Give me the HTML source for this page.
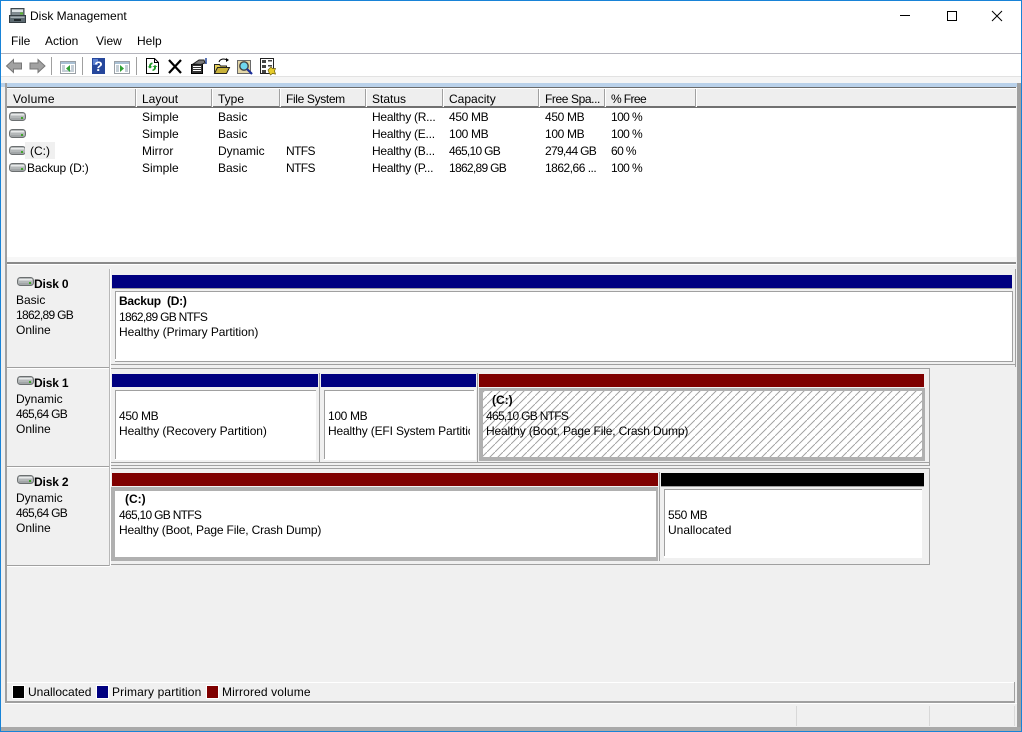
<!DOCTYPE html>
<html><head><meta charset="utf-8"><title>Disk Management</title>
<style>
html,body{margin:0;padding:0}
body{width:1022px;height:732px;position:relative;overflow:hidden;background:#f0f0f0;font:12px/15px "Liberation Sans",sans-serif;color:#000}
div,svg{position:absolute}
.t{position:absolute;white-space:nowrap;line-height:15px;margin-top:1px}
.b{font-weight:bold;margin-top:0}
.n{letter-spacing:-.7px}
.m{letter-spacing:-.35px}
.p{letter-spacing:-.6px}
.h{letter-spacing:-.25px}
.l{letter-spacing:-.16px}
.hl{background:#a0a0a0}
</style></head><body>
<!-- title + menu + toolbar -->
<div style="left:0;top:0;width:1022px;height:76px;background:#fff"></div>
<div style="left:0;top:53px;width:1022px;height:1px;background:#b4b4bc"></div>
<div style="left:0;top:76px;width:1022px;height:1px;background:#e2e2e2"></div>
<div style="left:0;top:77px;width:1022px;height:6px;background:#f5f5f5"></div>
<div style="left:0;top:83px;width:1017px;height:4px;background:#b9d1ea"></div>

<svg style="left:9px;top:7px" width="17" height="17" viewBox="0 0 17 17"><path d="M2 1.500h13v7H2z" fill="#7f8a90" stroke="#3e474c"/><path d="M3 2.500h11v2.500H3z" fill="#dfe5e8"/><path d="M11 5.500h3v2h-3z" fill="#5cb52f"/><path d="M.5 8.500h16v7H.5z" fill="#5d6b72" stroke="#333c41"/><path d="M1.500 9.500h14v1.500h-14z" fill="#a4aeb3"/><path d="M5 12h7v2H5z" fill="#1f282c"/></svg>
<span class="t" style="left:30px;top:8px">Disk Management</span>
<svg style="left:900px;top:10px" width="110" height="12" viewBox="0 0 110 12"><path d="M0 5.500h10" stroke="#000"/><path d="M47.500 1.500h9v9h-9z" fill="none" stroke="#000"/><path d="M92 1l10 10M102 1l-10 10" stroke="#000" fill="none"/></svg>

<span class="t" style="left:11px;top:33px">File</span>
<span class="t" style="left:45px;top:33px">Action</span>
<span class="t" style="left:96px;top:33px">View</span>
<span class="t" style="left:137px;top:33px">Help</span>

<!-- toolbar icons -->
<svg style="left:0;top:54px" width="290" height="23" viewBox="0 0 290 23">
<path d="M6.500 12l7-6.500v3.500h8v6h-8v3.500z" fill="#a2a2a2" stroke="#777"/>
<path d="M45 12l-7-6.500v3.500h-8v6h8v3.500z" fill="#a2a2a2" stroke="#777"/>
<path d="M51.500 3v18M82.500 3v18M136.500 3v18" stroke="#a0a0a0"/>
<path d="M60.500 7.500h15v12h-15z" fill="#fff" stroke="#9aa0a6"/><path d="M61 8h14v2H61z" fill="#a9c0d4"/><path d="M62 11h3v7h-3zM71 11h3v7h-3zM62 16h12v2H62z" fill="#c4ced6"/><path d="M66 14.500l4-3.500v7z" fill="#2fa032"/>
<path d="M92 4h13v16H92z" fill="#26479c"/><path d="M93 5h5v6h-5z" fill="#5a7fd0"/><text x="98.500" y="17" text-anchor="middle" font-family="Liberation Sans" font-weight="bold" font-size="14" fill="#fff">?</text>
<path d="M114.500 7.500h15v12h-15z" fill="#fff" stroke="#9aa0a6"/><path d="M115 8h14v2h-14z" fill="#a9c0d4"/><path d="M116 11h3v7h-3zM125 11h3v7h-3z" fill="#c4ced6"/><path d="M124 14.500l-4-3.500v7z" fill="#2fa032"/>
<path d="M146.500 4.500h8l4 4v11h-12z" fill="#fff" stroke="#000"/><path d="M154.500 4.500v4h4" fill="none" stroke="#000"/><path d="M152.500 8.500a3.500 3.500 0 0 0-3.500 4l-1.500 0 2.500 2 2.500-2h-1.500a2 2 0 0 1 1.500-2.500zM152.500 17a3.500 3.500 0 0 0 3.500-4l1.500 0-2.500-2-2.500 2h1.500a2 2 0 0 1-1.500 2.500z" fill="#1e9a28"/>
<path d="M169 6l12 13M181 6l-12 13" stroke="#000" stroke-width="2.200" fill="none"/>
<path d="M191.500 10.500h11v9h-11z" fill="#333" stroke="#000"/><path d="M193 12.500h8M193 14.500h8M193 16.500h8" stroke="#fff"/><path d="M193 10l6-4h5l1 3-4 1.500z" fill="#777" stroke="#222"/><path d="M206 4v6" stroke="#26479c" stroke-width="1.500"/>
<path d="M214.500 10.500h5l1 1.500h6v7h-12z" fill="#e8d25a" stroke="#222"/><path d="M214.500 19.500l3-6h12l-3 6z" fill="#c9b23a" stroke="#222"/><path d="M219 8c1-3 5-4 8-2" fill="none" stroke="#000"/><path d="M226 4l3 2-3 2z"/>
<path d="M237.500 6.500h13v13h-13z" fill="#e3d6a8" stroke="#6a6a6a"/><circle cx="244" cy="12" r="4.200" fill="#6fd6ee" stroke="#444" stroke-width="1.400"/><path d="M247 15l5 5" stroke="#1c2f9c" stroke-width="2.200"/>
<path d="M260.500 4.500h13v15h-13z" fill="#fff" stroke="#222"/><path d="M262 6h4v3h-4zM262 11h4v3h-4zM268 6h4v1.500h-4zM268 11h4v1.500h-4z" fill="#444"/><path d="M268 16l3-3 1.500 1.500 3 0-1 2.500 1 3-3-.5-2 1.500-1.500-2.500z" fill="#e6cc2a" stroke="#6b5c10" stroke-width=".7"/><path d="M262 16h4v3h-4z" fill="#444"/>
</svg>

<!-- frame -->
<div style="left:1017px;top:83px;width:4px;height:648px;background:#a0a0a0"></div>
<div style="left:5px;top:83px;width:2px;height:619px;background:#a0a0a0"></div>
<div style="left:0;top:727px;width:1022px;height:4px;background:#a9a9a9"></div>
<div style="left:0;top:0;width:1022px;height:1px;background:#1883d7"></div>
<div style="left:0;top:0;width:1px;height:732px;background:#1883d7"></div>
<div style="left:1021px;top:0;width:1px;height:732px;background:#1883d7"></div>
<div style="left:0;top:731px;width:1022px;height:1px;background:#1883d7"></div>

<!-- list -->
<div style="left:7px;top:87px;width:1009px;height:171px;background:#fff"></div>
<div style="left:7px;top:87px;width:1009px;height:1px;background:#6b6b6b"></div>
<div style="left:7px;top:88px;width:1009px;height:1px;background:#fff"></div>
<div style="left:7px;top:89px;width:1009px;height:17px;background:#eeeeee"></div>
<div style="left:7px;top:106px;width:1009px;height:2px;background:#707070"></div>
<div class="hl" style="left:135px;top:89px;width:1px;height:18px"></div><div style="left:136px;top:89px;width:1px;height:18px;background:#fff"></div>
<div class="hl" style="left:211px;top:89px;width:1px;height:18px"></div><div style="left:212px;top:89px;width:1px;height:18px;background:#fff"></div>
<div class="hl" style="left:279px;top:89px;width:1px;height:18px"></div><div style="left:280px;top:89px;width:1px;height:18px;background:#fff"></div>
<div class="hl" style="left:365px;top:89px;width:1px;height:18px"></div><div style="left:366px;top:89px;width:1px;height:18px;background:#fff"></div>
<div class="hl" style="left:442px;top:89px;width:1px;height:18px"></div><div style="left:443px;top:89px;width:1px;height:18px;background:#fff"></div>
<div class="hl" style="left:538px;top:89px;width:1px;height:18px"></div><div style="left:539px;top:89px;width:1px;height:18px;background:#fff"></div>
<div class="hl" style="left:604px;top:89px;width:1px;height:18px"></div><div style="left:605px;top:89px;width:1px;height:18px;background:#fff"></div>
<div class="hl" style="left:695px;top:89px;width:1px;height:18px"></div><div style="left:696px;top:89px;width:1px;height:18px;background:#fff"></div>

<span class="t" style="left:13px;top:91px;letter-spacing:.3px">Volume</span>
<span class="t" style="left:142px;top:91px">Layout</span>
<span class="t" style="left:218px;top:91px">Type</span>
<span class="t m" style="left:286px;top:91px">File System</span>
<span class="t" style="left:372px;top:91px">Status</span>
<span class="t" style="left:449px;top:91px">Capacity</span>
<span class="t" style="left:545px;top:91px;letter-spacing:-.4px">Free Spa...</span>
<span class="t p" style="left:611px;top:91px">% Free</span>

<svg style="left:9px;top:111px" width="17" height="64" viewBox="0 0 17 64">
<g id="d"><path d="M.5 4.500c0-1.500 1-3 3-3h10c2 0 3 1.500 3 3v2c0 1.500-1 3-3 3h-10c-2 0-3-1.500-3-3z" fill="#b4b8b9" stroke="#6b6f70"/><path d="M2 3h13v1.500H2z" fill="#e8eaea"/><path d="M2 7.500h13v1H2z" fill="#8f9496"/><path d="M12 6h2v2h-2z" fill="#3fa52a"/></g>
<use href="#d" y="17"/><use href="#d" y="34"/><use href="#d" y="51"/>
</svg>

<div style="left:25px;top:142px;width:30px;height:17px;background:#f0f0f0"></div>
<span class="t" style="left:30px;top:143px">(C:)</span>
<span class="t l" style="left:27px;top:160px">Backup (D:)</span>

<span class="t" style="left:142px;top:109px">Simple</span><span class="t" style="left:218px;top:109px">Basic</span><span class="t h" style="left:372px;top:109px">Healthy (R...</span><span class="t m" style="left:449px;top:109px">450 MB</span><span class="t m" style="left:545px;top:109px">450 MB</span><span class="t p" style="left:611px;top:109px">100 %</span>
<span class="t" style="left:142px;top:126px">Simple</span><span class="t" style="left:218px;top:126px">Basic</span><span class="t h" style="left:372px;top:126px">Healthy (E...</span><span class="t m" style="left:449px;top:126px">100 MB</span><span class="t m" style="left:545px;top:126px">100 MB</span><span class="t p" style="left:611px;top:126px">100 %</span>
<span class="t" style="left:142px;top:143px">Mirror</span><span class="t" style="left:218px;top:143px">Dynamic</span><span class="t p" style="left:286px;top:143px">NTFS</span><span class="t h" style="left:372px;top:143px">Healthy (B...</span><span class="t n" style="left:449px;top:143px">465,10 GB</span><span class="t n" style="left:545px;top:143px">279,44 GB</span><span class="t p" style="left:611px;top:143px">60 %</span>
<span class="t" style="left:142px;top:160px">Simple</span><span class="t" style="left:218px;top:160px">Basic</span><span class="t p" style="left:286px;top:160px">NTFS</span><span class="t h" style="left:372px;top:160px">Healthy (P...</span><span class="t n" style="left:449px;top:160px">1862,89 GB</span><span class="t" style="left:545px;top:160px;letter-spacing:-.5px">1862,66 ...</span><span class="t p" style="left:611px;top:160px">100 %</span>

<!-- splitter -->
<div style="left:7px;top:257px;width:1009px;height:5px;background:#f7f7f7"></div>
<div style="left:7px;top:262px;width:1009px;height:2px;background:#8a8a8a"></div>
<div style="left:7px;top:264px;width:1009px;height:1px;background:#fff"></div>

<!-- disk labels -->
<div class="hl" style="left:7px;top:367px;width:103px;height:1px"></div>
<div style="left:7px;top:368px;width:103px;height:1px;background:#fff"></div>
<div class="hl" style="left:7px;top:466px;width:103px;height:1px"></div>
<div style="left:7px;top:467px;width:103px;height:1px;background:#fff"></div>
<div class="hl" style="left:7px;top:565px;width:103px;height:1px"></div>
<div style="left:7px;top:566px;width:103px;height:1px;background:#fff"></div>
<div class="hl" style="left:109px;top:269px;width:1px;height:297px;background:#b8b8b8"></div>
<div style="left:110px;top:269px;width:1px;height:297px;background:#fff"></div>

<svg style="left:17px;top:276px" width="17" height="12"><use href="#d"/></svg>
<svg style="left:17px;top:375px" width="17" height="12"><use href="#d"/></svg>
<svg style="left:17px;top:474px" width="17" height="12"><use href="#d"/></svg>
<span class="t b" style="left:34px;top:277px;letter-spacing:-.15px">Disk 0</span>
<span class="t" style="left:16px;top:292px">Basic</span><span class="t n" style="left:16px;top:307px">1862,89 GB</span><span class="t" style="left:16px;top:322px">Online</span>
<span class="t b" style="left:34px;top:376px;letter-spacing:-.15px">Disk 1</span>
<span class="t" style="left:16px;top:391px">Dynamic</span><span class="t n" style="left:16px;top:406px">465,64 GB</span><span class="t" style="left:16px;top:421px">Online</span>
<span class="t b" style="left:34px;top:475px;letter-spacing:-.15px">Disk 2</span>
<span class="t" style="left:16px;top:490px">Dynamic</span><span class="t n" style="left:16px;top:505px">465,64 GB</span><span class="t" style="left:16px;top:520px">Online</span>

<!-- Disk 0 -->
<div class="hl" style="left:1015px;top:269px;width:1px;height:98px"></div>
<div class="hl" style="left:111px;top:364px;width:905px;height:1px"></div>
<div style="left:112px;top:275px;width:900px;height:13px;background:#000080"></div>
<div style="left:112px;top:288px;width:900px;height:1px;background:#a0a0a0"></div>
<div style="left:115px;top:291px;width:897px;height:70px;background:#fff"></div>
<div class="hl" style="left:115px;top:291px;width:897px;height:1px"></div>
<div class="hl" style="left:115px;top:291px;width:1px;height:68px"></div>
<div class="hl" style="left:1012px;top:291px;width:1px;height:71px"></div>
<div class="hl" style="left:115px;top:361px;width:898px;height:1px"></div>
<span class="t b" style="left:119px;top:294px;letter-spacing:-.25px">Backup&nbsp; (D:)</span>
<span class="t n" style="left:119px;top:309px">1862,89 GB NTFS</span>
<span class="t" style="left:119px;top:324px;letter-spacing:-.05px">Healthy (Primary Partition)</span>

<!-- Disk 1 -->
<div class="hl" style="left:111px;top:368px;width:819px;height:1px"></div>
<div class="hl" style="left:929px;top:368px;width:1px;height:98px"></div>
<div class="hl" style="left:111px;top:465px;width:819px;height:1px"></div>
<div class="hl" style="left:111px;top:462px;width:818px;height:1px"></div>
<div class="hl" style="left:319px;top:373px;width:1px;height:89px"></div>
<div class="hl" style="left:477px;top:373px;width:1px;height:89px"></div>

<div style="left:112px;top:374px;width:206px;height:13px;background:#000080"></div>
<div style="left:321px;top:374px;width:155px;height:13px;background:#000080"></div>
<div style="left:479px;top:374px;width:445px;height:13px;background:#7f0000"></div>
<div style="left:115px;top:390px;width:201px;height:70px;background:#fff"></div>
<div class="hl" style="left:115px;top:390px;width:201px;height:1px"></div>
<div class="hl" style="left:115px;top:390px;width:1px;height:69px"></div>
<div style="left:324px;top:390px;width:152px;height:70px;background:#fff"></div>
<div class="hl" style="left:324px;top:390px;width:150px;height:1px"></div>
<div class="hl" style="left:324px;top:390px;width:1px;height:69px"></div>
<svg style="left:479px;top:388px" width="446" height="73" viewBox="0 0 446 73"><defs><pattern id="hp" width="8" height="8" patternUnits="userSpaceOnUse"><rect width="8" height="8" fill="#fff"/><path d="M0 8L8 0" stroke="#a8a8a8" stroke-width="1" shape-rendering="crispEdges"/></pattern></defs><rect width="446" height="73" fill="#b0b0b0"/><rect x="4" y="3" width="439" height="66" fill="url(#hp)"/></svg>
<span class="t m" style="left:119px;top:408px">450 MB</span>
<span class="t" style="left:119px;top:423px;letter-spacing:-.08px">Healthy (Recovery Partition)</span>
<span class="t m" style="left:328px;top:408px">100 MB</span>
<span class="t l" style="left:328px;top:423px;width:142px;overflow:hidden">Healthy (EFI System Partition)</span>
<span class="t b" style="left:492px;top:393px">(C:)</span>
<span class="t n" style="left:486px;top:408px">465,10 GB NTFS</span>
<span class="t l" style="left:486px;top:423px">Healthy (Boot, Page File, Crash Dump)</span>

<!-- Disk 2 -->
<div class="hl" style="left:111px;top:468px;width:819px;height:1px"></div>
<div class="hl" style="left:929px;top:468px;width:1px;height:97px"></div>
<div class="hl" style="left:111px;top:564px;width:819px;height:1px"></div>
<div class="hl" style="left:659px;top:472px;width:1px;height:89px"></div>

<div style="left:112px;top:473px;width:546px;height:13px;background:#7f0000"></div>
<div style="left:661px;top:473px;width:263px;height:13px;background:#000"></div>
<div class="hl" style="left:661px;top:486px;width:263px;height:1px"></div>
<div style="left:111px;top:487px;width:547px;height:74px;box-sizing:border-box;border:solid #b0b0b0;border-width:4px 2px 4px 4px;background:#fff"></div>
<div style="left:664px;top:489px;width:258px;height:69px;background:#fff"></div>
<div class="hl" style="left:664px;top:489px;width:258px;height:1px"></div>
<div class="hl" style="left:664px;top:489px;width:1px;height:67px"></div>
<span class="t b" style="left:125px;top:492px">(C:)</span>
<span class="t n" style="left:119px;top:507px">465,10 GB NTFS</span>
<span class="t l" style="left:119px;top:522px">Healthy (Boot, Page File, Crash Dump)</span>
<span class="t m" style="left:668px;top:507px">550 MB</span>
<span class="t" style="left:668px;top:522px">Unallocated</span>

<!-- legend -->
<div style="left:7px;top:682px;width:1007px;height:1px;background:#fff"></div>
<div style="left:1014px;top:682px;width:1px;height:20px;background:#a0a0a0"></div>
<div style="left:5px;top:701px;width:1010px;height:2px;background:#a0a0a0"></div>
<div style="left:5px;top:703px;width:1012px;height:1px;background:#fff"></div>
<div style="left:12px;top:685px;width:11px;height:12px;background:#000;border:1px solid #fff"></div>
<span class="t" style="left:28px;top:684px">Unallocated</span>
<div style="left:96px;top:685px;width:11px;height:12px;background:#000080;border:1px solid #fff"></div>
<span class="t" style="left:112px;top:684px;letter-spacing:.12px">Primary partition</span>
<div style="left:206px;top:685px;width:11px;height:12px;background:#7f0000;border:1px solid #fff"></div>
<span class="t" style="left:222px;top:684px;letter-spacing:.13px">Mirrored volume</span>

<!-- status -->
<div style="left:796px;top:706px;width:1px;height:20px;background:#d8d8d8"></div>
<div style="left:929px;top:706px;width:1px;height:20px;background:#d8d8d8"></div>
<div style="left:1014px;top:706px;width:1px;height:20px;background:#d8d8d8"></div>
</body></html>
